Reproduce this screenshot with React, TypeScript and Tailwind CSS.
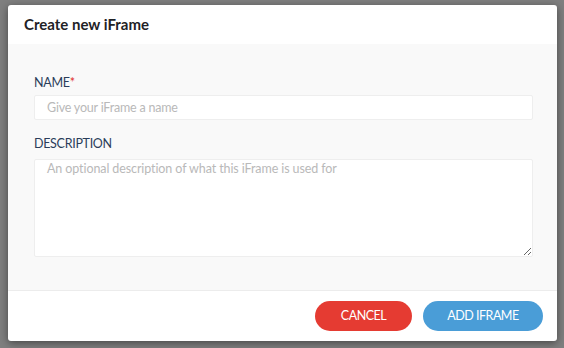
export default function App() {
  return (
    <div className="h-[348px] w-[564px] bg-[#7f7f7f] pl-[8px] pt-[5px] font-['Lato',sans-serif]">
      <div className="flex h-[336px] w-[549px] flex-col overflow-hidden rounded-[3px] bg-white shadow-[0_2px_8px_rgba(0,0,0,0.45)]">
        {/* Header */}
        <div className="flex h-[39px] shrink-0 items-center px-[16px]">
          <h2 className="text-[15px] font-bold text-[#1f2226]">Create new iFrame</h2>
        </div>
        {/* Body */}
        <div className="flex flex-1 flex-col border-b border-[#ececec] bg-[#f9f9f9] px-[26px] pt-[31px]">
          <label className="text-[12.5px] leading-[16px] tracking-[-0.3px] text-[#2b3d5a]">
            NAME<span className="text-[#e0302b]">*</span>
          </label>
          <input
            className="mt-[4px] h-[25px] w-[499px] rounded-[2px] border border-[#eeeeee] bg-white px-[12px] text-[12.5px] tracking-[-0.2px] text-[#333] outline-none placeholder:text-[#b9b9b9]"
            placeholder="Give your iFrame a name"
          />
          <label className="mt-[16px] text-[12.5px] leading-[16px] tracking-[-0.3px] text-[#2b3d5a]">DESCRIPTION</label>
          <textarea
            className="mt-[7px] h-[98px] w-[499px] rounded-[2px] border border-[#eeeeee] bg-white px-[12px] pt-[1px] text-[12.5px] leading-[16px] tracking-[-0.1px] text-[#333] outline-none placeholder:text-[#b9b9b9]"
            placeholder="An optional description of what this iFrame is used for"
          />
        </div>
        {/* Footer */}
        <div className="flex h-[50px] shrink-0 items-center justify-end gap-[11px] pr-[14px]">
          <button className="h-[30px] w-[97px] rounded-full bg-[#e53b32] text-[12.5px] tracking-[-0.5px] text-white">CANCEL</button>
          <button className="h-[30px] w-[120px] rounded-full bg-[#4a9dd7] text-[12.5px] tracking-[-0.5px] text-white">ADD IFRAME</button>
        </div>
      </div>
    </div>
  );
}
